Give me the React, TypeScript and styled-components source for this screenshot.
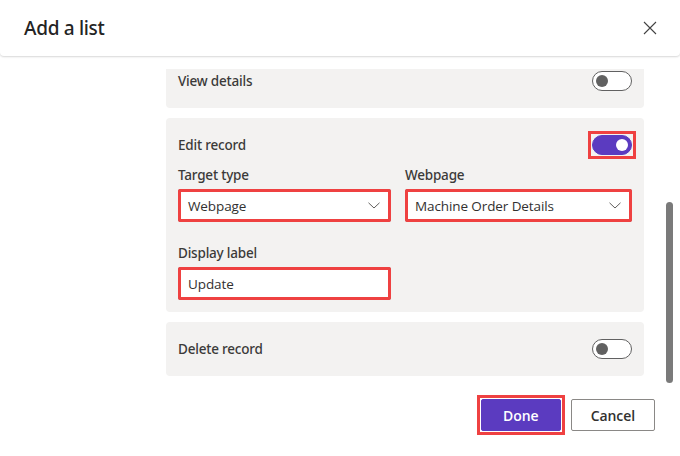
import React, { useLayoutEffect, useRef, useState } from "react";
import styled, { createGlobalStyle } from "styled-components";

const RED = "#ef4141";
const PURPLE = "#5b3bc0";
const LABEL_FONT = `"Noto Sans", "Open Sans", sans-serif`;

const Global = createGlobalStyle`
  html, body { margin: 0; padding: 0; background: #ffffff; }
  body { font-family: "Segoe UI", "Open Sans", "Noto Sans", sans-serif; color: #323130; }
  * { box-sizing: border-box; }
`;

const Dialog = styled.div`
  width: 680px;
  height: 456px;
  display: flex;
  flex-direction: column;
  background: #ffffff;
  overflow: hidden;
`;

const Header = styled.header`
  flex: none;
  height: 56px;
  display: flex;
  align-items: center;
  justify-content: space-between;
  padding: 0 23px 0 24px;
  background: #ffffff;
  border-radius: 0 0 4px 4px;
  box-shadow: 0 1px 2px rgba(0, 0, 0, 0.16);
  position: relative;
  z-index: 1;
`;

const Title = styled.h1`
  margin: 0;
  font-family: ${LABEL_FONT};
  font-size: 19px;
  font-weight: 500;
  color: #242424;
  letter-spacing: -0.3px;
`;

const CloseButton = styled.button`
  width: 14px;
  height: 14px;
  padding: 0;
  border: 0;
  background: none;
  display: flex;
  align-items: center;
  justify-content: center;
  cursor: pointer;
`;

const Body = styled.div`
  flex: none;
  height: 314px;
  margin-top: 13px;
  position: relative;
`;

const Scroller = styled.div`
  height: 314px;
  overflow-y: auto;
  scrollbar-width: none;
  &::-webkit-scrollbar { display: none; }
`;

const ScrollThumb = styled.div`
  position: absolute;
  right: 7px;
  width: 7px;
  border-radius: 4px;
  background: #7a7a7a;
`;

const Content = styled.div`
  display: flex;
  flex-direction: column;
  gap: 10px;
  padding: 25px 36px 7px 166px;
`;

const Card = styled.section`
  background: #f3f2f1;
  border-radius: 4px;
  padding: 12px;
`;

const ToggleRow = styled.div`
  height: 30px;
  display: flex;
  align-items: center;
  justify-content: space-between;
`;

const RowLabel = styled.span`
  font-family: ${LABEL_FONT};
  font-size: 13.5px;
  font-weight: 500;
  color: #3b3a39;
  letter-spacing: -0.2px;
`;

const Annotated = styled.span`
  display: inline-flex;
  outline: 3px solid ${RED};
  outline-offset: 1px;
`;

const ToggleTrack = styled.span<{ $on?: boolean }>`
  width: 40px;
  height: 20px;
  border-radius: 10px;
  display: flex;
  align-items: center;
  justify-content: ${(p) => (p.$on ? "flex-end" : "flex-start")};
  padding: 0 3px;
  background: ${(p) => (p.$on ? PURPLE : "#ffffff")};
  border: 1px solid ${(p) => (p.$on ? PURPLE : "#616161")};
`;

const ToggleThumb = styled.span<{ $on?: boolean }>`
  width: 12px;
  height: 12px;
  border-radius: 50%;
  background: ${(p) => (p.$on ? "#ffffff" : "#616161")};
`;

const FieldGrid = styled.div`
  margin-top: 5px;
  display: grid;
  grid-template-columns: 213px 1fr;
  column-gap: 14px;
  row-gap: 21px;
`;

const Field = styled.div`
  display: flex;
  flex-direction: column;
  gap: 4px;
`;

const FieldLabel = styled.label`
  height: 20px;
  line-height: 20px;
  font-family: ${LABEL_FONT};
  font-size: 13.5px;
  font-weight: 500;
  color: #3b3a39;
  letter-spacing: -0.2px;
`;

const FieldBox = styled.div<{ $marked?: boolean }>`
  height: 33px;
  display: flex;
  align-items: center;
  justify-content: space-between;
  padding: 0 10px 0 9px;
  background: #ffffff;
  border: 1px solid #8a8886;
  border-radius: 2px;
  font-size: 13.5px;
  color: #323130;
  letter-spacing: -0.1px;
  outline: ${(p) => (p.$marked ? `3px solid ${RED}` : "none")};
  outline-offset: -3px;
`;

const Footer = styled.footer`
  display: flex;
  justify-content: flex-end;
  align-items: center;
  gap: 10px;
  padding: 16px 25px 0 0;
`;

const Button = styled.button<{ $primary?: boolean }>`
  height: 32px;
  min-width: 80px;
  padding: 0 19px;
  border-radius: 2px;
  font-family: inherit;
  font-size: 14px;
  font-weight: 600;
  letter-spacing: -0.1px;
  cursor: pointer;
  background: ${(p) => (p.$primary ? PURPLE : "#ffffff")};
  color: ${(p) => (p.$primary ? "#ffffff" : "#323130")};
  border: 1px solid ${(p) => (p.$primary ? PURPLE : "#8a8886")};
`;

const Toggle = ({ on }: { on?: boolean }) => (
  <ToggleTrack $on={on} role="switch" aria-checked={!!on}>
    <ToggleThumb $on={on} />
  </ToggleTrack>
);

const Chevron = () => (
  <svg width="12" height="7" viewBox="0 0 12 7" fill="none">
    <path d="M0.5 0.8 L6 6 L11.5 0.8" stroke="#605e5c" strokeWidth="1" />
  </svg>
);

const ToggleCard = ({ label, on }: { label: string; on?: boolean }) => (
  <Card>
    <ToggleRow>
      <RowLabel>{label}</RowLabel>
      <Toggle on={on} />
    </ToggleRow>
  </Card>
);

export default function App() {
  const scrollRef = useRef<HTMLDivElement>(null);
  const [thumb, setThumb] = useState({ top: 0, height: 0 });

  useLayoutEffect(() => {
    const el = scrollRef.current;
    if (!el) return;
    el.scrollTop = el.scrollHeight - el.clientHeight;
    const ratio = el.clientHeight / el.scrollHeight;
    setThumb({ top: el.scrollTop * ratio, height: el.clientHeight * ratio });
  }, []);

  return (
    <>
      <Global />
      <Dialog>
        <Header>
          <Title>Add a list</Title>
          <CloseButton aria-label="Close">
            <svg width="14" height="14" viewBox="0 0 14 14">
              <path d="M1 1 L13 13 M13 1 L1 13" stroke="#424242" strokeWidth="1.1" />
            </svg>
          </CloseButton>
        </Header>
        <Body>
          <Scroller ref={scrollRef}>
            <Content>
              <ToggleCard label="Enable table permissions" />
              <ToggleCard label="Search" />
              <ToggleCard label="Create record" />
              <ToggleCard label="View details" />
              <Card>
                <ToggleRow>
                  <RowLabel>Edit record</RowLabel>
                  <Annotated>
                    <Toggle on />
                  </Annotated>
                </ToggleRow>
                <FieldGrid>
                  <Field>
                    <FieldLabel>Target type</FieldLabel>
                    <FieldBox $marked>
                      <span>Webpage</span>
                      <Chevron />
                    </FieldBox>
                  </Field>
                  <Field>
                    <FieldLabel>Webpage</FieldLabel>
                    <FieldBox $marked>
                      <span>Machine Order Details</span>
                      <Chevron />
                    </FieldBox>
                  </Field>
                  <Field>
                    <FieldLabel>Display label</FieldLabel>
                    <FieldBox $marked>
                      <span>Update</span>
                    </FieldBox>
                  </Field>
                </FieldGrid>
              </Card>
              <ToggleCard label="Delete record" />
            </Content>
          </Scroller>
          <ScrollThumb style={{ top: thumb.top, height: thumb.height }} />
        </Body>
        <Footer>
          <Annotated>
            <Button $primary>Done</Button>
          </Annotated>
          <Button>Cancel</Button>
        </Footer>
      </Dialog>
    </>
  );
}
